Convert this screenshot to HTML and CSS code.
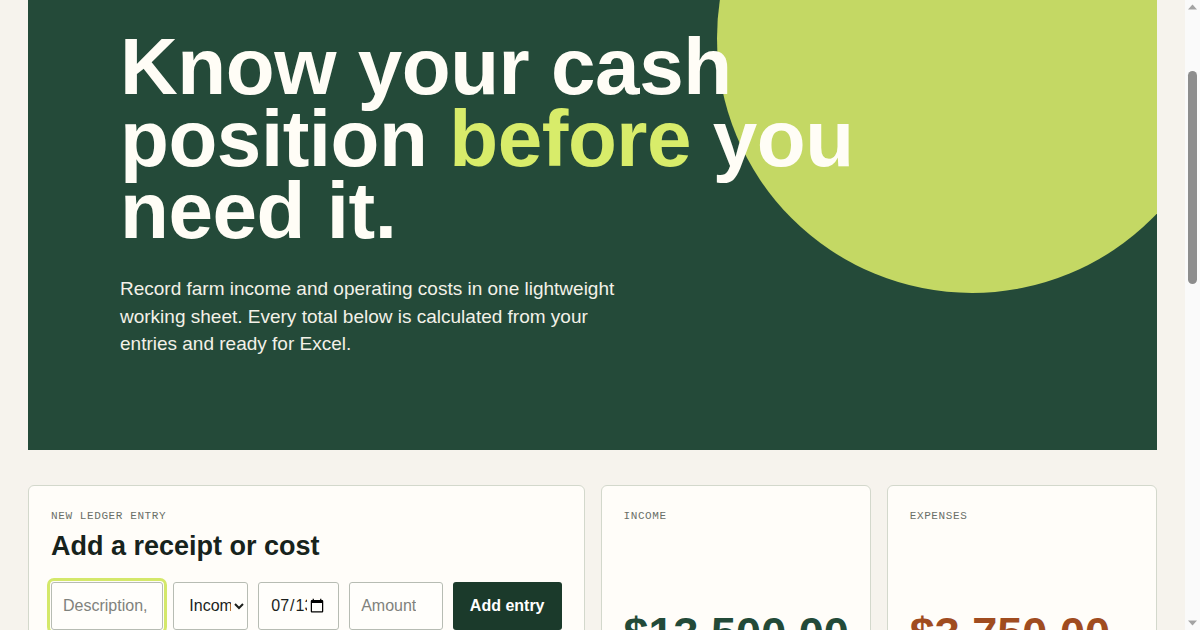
FILE: index.html
```html
<!DOCTYPE html>
<html lang="en">
<head>
<meta charset="utf-8">
<title>Farm Cash Ledger</title>
<link rel="stylesheet" href="styles.css">
</head>
<body>
<div class="page">
  <section class="hero">
    <div class="hero-circle"></div>
    <div class="hero-copy">
      <h1 class="hero-title">Know your cash position <span class="accent">before</span> you need it.</h1>
      <p class="hero-lede">Record farm income and operating costs in one lightweight working sheet. Every total below is calculated from your entries and ready for Excel.</p>
    </div>
  </section>

  <section class="dashboard">
    <div class="card card-form">
      <div class="eyebrow">New ledger entry</div>
      <h2 class="card-title">Add a receipt or cost</h2>
      <form class="entry-form" onsubmit="return false">
        <input class="field" type="text" placeholder="Description, vendor or buyer" autofocus>
        <select class="field field-select">
          <option>Income</option>
          <option>Expense</option>
        </select>
        <input class="field field-date" type="date" value="2025-07-13">
        <input class="field" type="number" placeholder="Amount">
        <button class="btn" type="submit">Add entry</button>
      </form>
      <p class="hint">Entries are saved in this browser until you export.</p>
    </div>

    <div class="card card-stat">
      <div class="eyebrow">Income</div>
      <div class="stat-value stat-income">$13,500.00</div>
    </div>

    <div class="card card-stat">
      <div class="eyebrow">Expenses</div>
      <div class="stat-value stat-expense">$3,750.00</div>
    </div>

    <div class="card card-stat card-wide">
      <div class="eyebrow">Net position</div>
      <div class="stat-value stat-income">$9,750.00</div>
    </div>

    <div class="card card-stat card-wide">
      <div class="eyebrow">Entries recorded</div>
      <div class="stat-value">6</div>
    </div>
  </section>

  <section class="card ledger">
    <div class="ledger-head">
      <div>
        <div class="eyebrow">Working sheet</div>
        <h2 class="card-title">Ledger entries</h2>
      </div>
      <button class="btn btn-ghost" type="button">Export to Excel</button>
    </div>
    <table class="ledger-table">
      <thead>
        <tr><th>Date</th><th>Description</th><th>Type</th><th class="num">Amount</th></tr>
      </thead>
      <tbody>
        <tr><td>07/02/2025</td><td>Hay sale — Miller Farms</td><td>Income</td><td class="num">$4,200.00</td></tr>
        <tr><td>07/04/2025</td><td>Diesel fuel</td><td>Expense</td><td class="num">$640.00</td></tr>
        <tr><td>07/06/2025</td><td>Farmers market receipts</td><td>Income</td><td class="num">$1,800.00</td></tr>
        <tr><td>07/08/2025</td><td>Seed and fertilizer</td><td>Expense</td><td class="num">$2,110.00</td></tr>
        <tr><td>07/10/2025</td><td>Cattle sale</td><td>Income</td><td class="num">$7,500.00</td></tr>
        <tr><td>07/12/2025</td><td>Equipment repair</td><td>Expense</td><td class="num">$1,000.00</td></tr>
      </tbody>
    </table>
  </section>

  <footer class="footer">Farm Cash Ledger · Totals update as you type.</footer>
</div>

<div class="scrollbar" aria-hidden="true">
  <svg class="scroll-arrow scroll-arrow-up" width="9" height="6" viewBox="0 0 9 6"><path d="M0 5.5 L4.5 0.5 L9 5.5 Z" fill="#a3a3a3"/></svg>
  <div class="scroll-thumb"></div>
  <svg class="scroll-arrow scroll-arrow-down" width="9" height="6" viewBox="0 0 9 6"><path d="M0 0.5 L4.5 5.5 L9 0.5 Z" fill="#a3a3a3"/></svg>
</div>
</body>
</html>
```

FILE: styles.css
```css
* { box-sizing: border-box; }

html, body {
  margin: 0;
  padding: 0;
}

body {
  margin-right: 15px;
  background: #f6f3ed;
  color: #1b2a21;
  font-family: "Liberation Sans", Arial, sans-serif;
}

.page {
  padding: 0 28px 60px;
}

.hero {
  position: relative;
  overflow: hidden;
  background: #244a39;
  padding: 31px 92px 92px;
}

.hero-circle {
  position: absolute;
  top: -217px;
  right: -70px;
  width: 510px;
  height: 510px;
  border-radius: 50%;
  background: #c4d864;
}

.hero-copy {
  position: relative;
}

.hero-title {
  margin: 0;
  max-width: 760px;
  font-size: 80px;
  line-height: 0.9;
  font-weight: 700;
  letter-spacing: -0.45px;
  color: #fffdf6;
}

.accent {
  color: #d8ec6a;
}

.hero-lede {
  margin: 28px 0 0;
  max-width: 520px;
  font-size: 19px;
  line-height: 27.5px;
  color: #f3f1e8;
}

.dashboard {
  margin-top: 35px;
  display: grid;
  grid-template-columns: repeat(4, minmax(0, 1fr));
  gap: 16px;
}

.card {
  background: #fffdf9;
  border: 1px solid #d3d8cc;
  border-radius: 6px;
  padding: 22px;
}

.card-form {
  grid-column: span 2;
}

.card-wide {
  grid-column: span 2;
}

.card-stat {
  display: flex;
  flex-direction: column;
}

.eyebrow {
  font-family: "Liberation Mono", "DejaVu Sans Mono", monospace;
  font-size: 11px;
  line-height: 16px;
  letter-spacing: 0.6px;
  text-transform: uppercase;
  color: #6a6f68;
}

.card-title {
  margin: 6px 0 0;
  font-size: 27px;
  line-height: 32px;
  font-weight: 700;
  color: #17231c;
}

.entry-form {
  margin-top: 20px;
  display: grid;
  grid-template-columns: minmax(0, 1.5fr) minmax(0, 1fr) minmax(0, 1.08fr) minmax(0, 1.25fr) auto;
  gap: 10px;
}

.field {
  min-width: 0;
  width: 100%;
  height: 48px;
  padding: 0 11px;
  border: 1px solid #b7bcb3;
  border-radius: 3px;
  background: #fffefb;
  font-family: "Liberation Sans", Arial, sans-serif;
  font-size: 16px;
  color: #1b1f1c;
}

.field::placeholder {
  color: #7f827d;
}

.field:focus {
  outline: 3px solid #d4e86a;
  outline-offset: 1px;
}

.field-select {
  padding: 0 0 0 11px;
}

.btn {
  height: 48px;
  padding: 0 17px;
  border: 0;
  border-radius: 3px;
  background: #1b3a2b;
  color: #ffffff;
  font-family: "Liberation Sans", Arial, sans-serif;
  font-size: 16px;
  font-weight: 700;
  cursor: pointer;
}

.hint {
  margin: 10px 0 0;
  font-size: 13px;
  line-height: 18px;
  color: #6a6f68;
}

.stat-value {
  margin-top: auto;
  font-size: 45px;
  line-height: 49px;
  font-weight: 700;
  color: #17231c;
}

.stat-income { color: #234a38; }
.stat-expense { color: #a04c1f; }

.card-wide .stat-value {
  margin-top: 60px;
}

.ledger {
  margin-top: 16px;
}

.ledger-head {
  display: flex;
  justify-content: space-between;
  align-items: flex-end;
}

.btn-ghost {
  background: transparent;
  color: #1b3a2b;
  border: 1px solid #1b3a2b;
}

.ledger-table {
  margin-top: 20px;
  width: 100%;
  border-collapse: collapse;
  font-size: 15px;
}

.ledger-table th {
  text-align: left;
  font-family: "Liberation Mono", "DejaVu Sans Mono", monospace;
  font-size: 11px;
  font-weight: 400;
  letter-spacing: 0.6px;
  text-transform: uppercase;
  color: #6a6f68;
  padding: 10px 8px;
  border-bottom: 1px solid #d3d8cc;
}

.ledger-table td {
  padding: 14px 8px;
  border-bottom: 1px solid #e6e8e0;
}

.num { text-align: right; }

.footer {
  margin-top: 40px;
  font-size: 13px;
  color: #6a6f68;
}

/* Window scrollbar as it appears in the captured frame */
.scrollbar {
  position: fixed;
  top: 0;
  right: 0;
  bottom: 0;
  width: 15px;
  background: #fafafa;
}

.scroll-arrow {
  position: absolute;
  left: 3px;
  display: block;
}

.scroll-arrow-up { top: 4px; }
.scroll-arrow-down { bottom: 4px; }

.scroll-thumb {
  position: absolute;
  top: 71px;
  left: 3px;
  width: 9px;
  height: 213px;
  border-radius: 5px;
  background: #8d8d8d;
}
```
